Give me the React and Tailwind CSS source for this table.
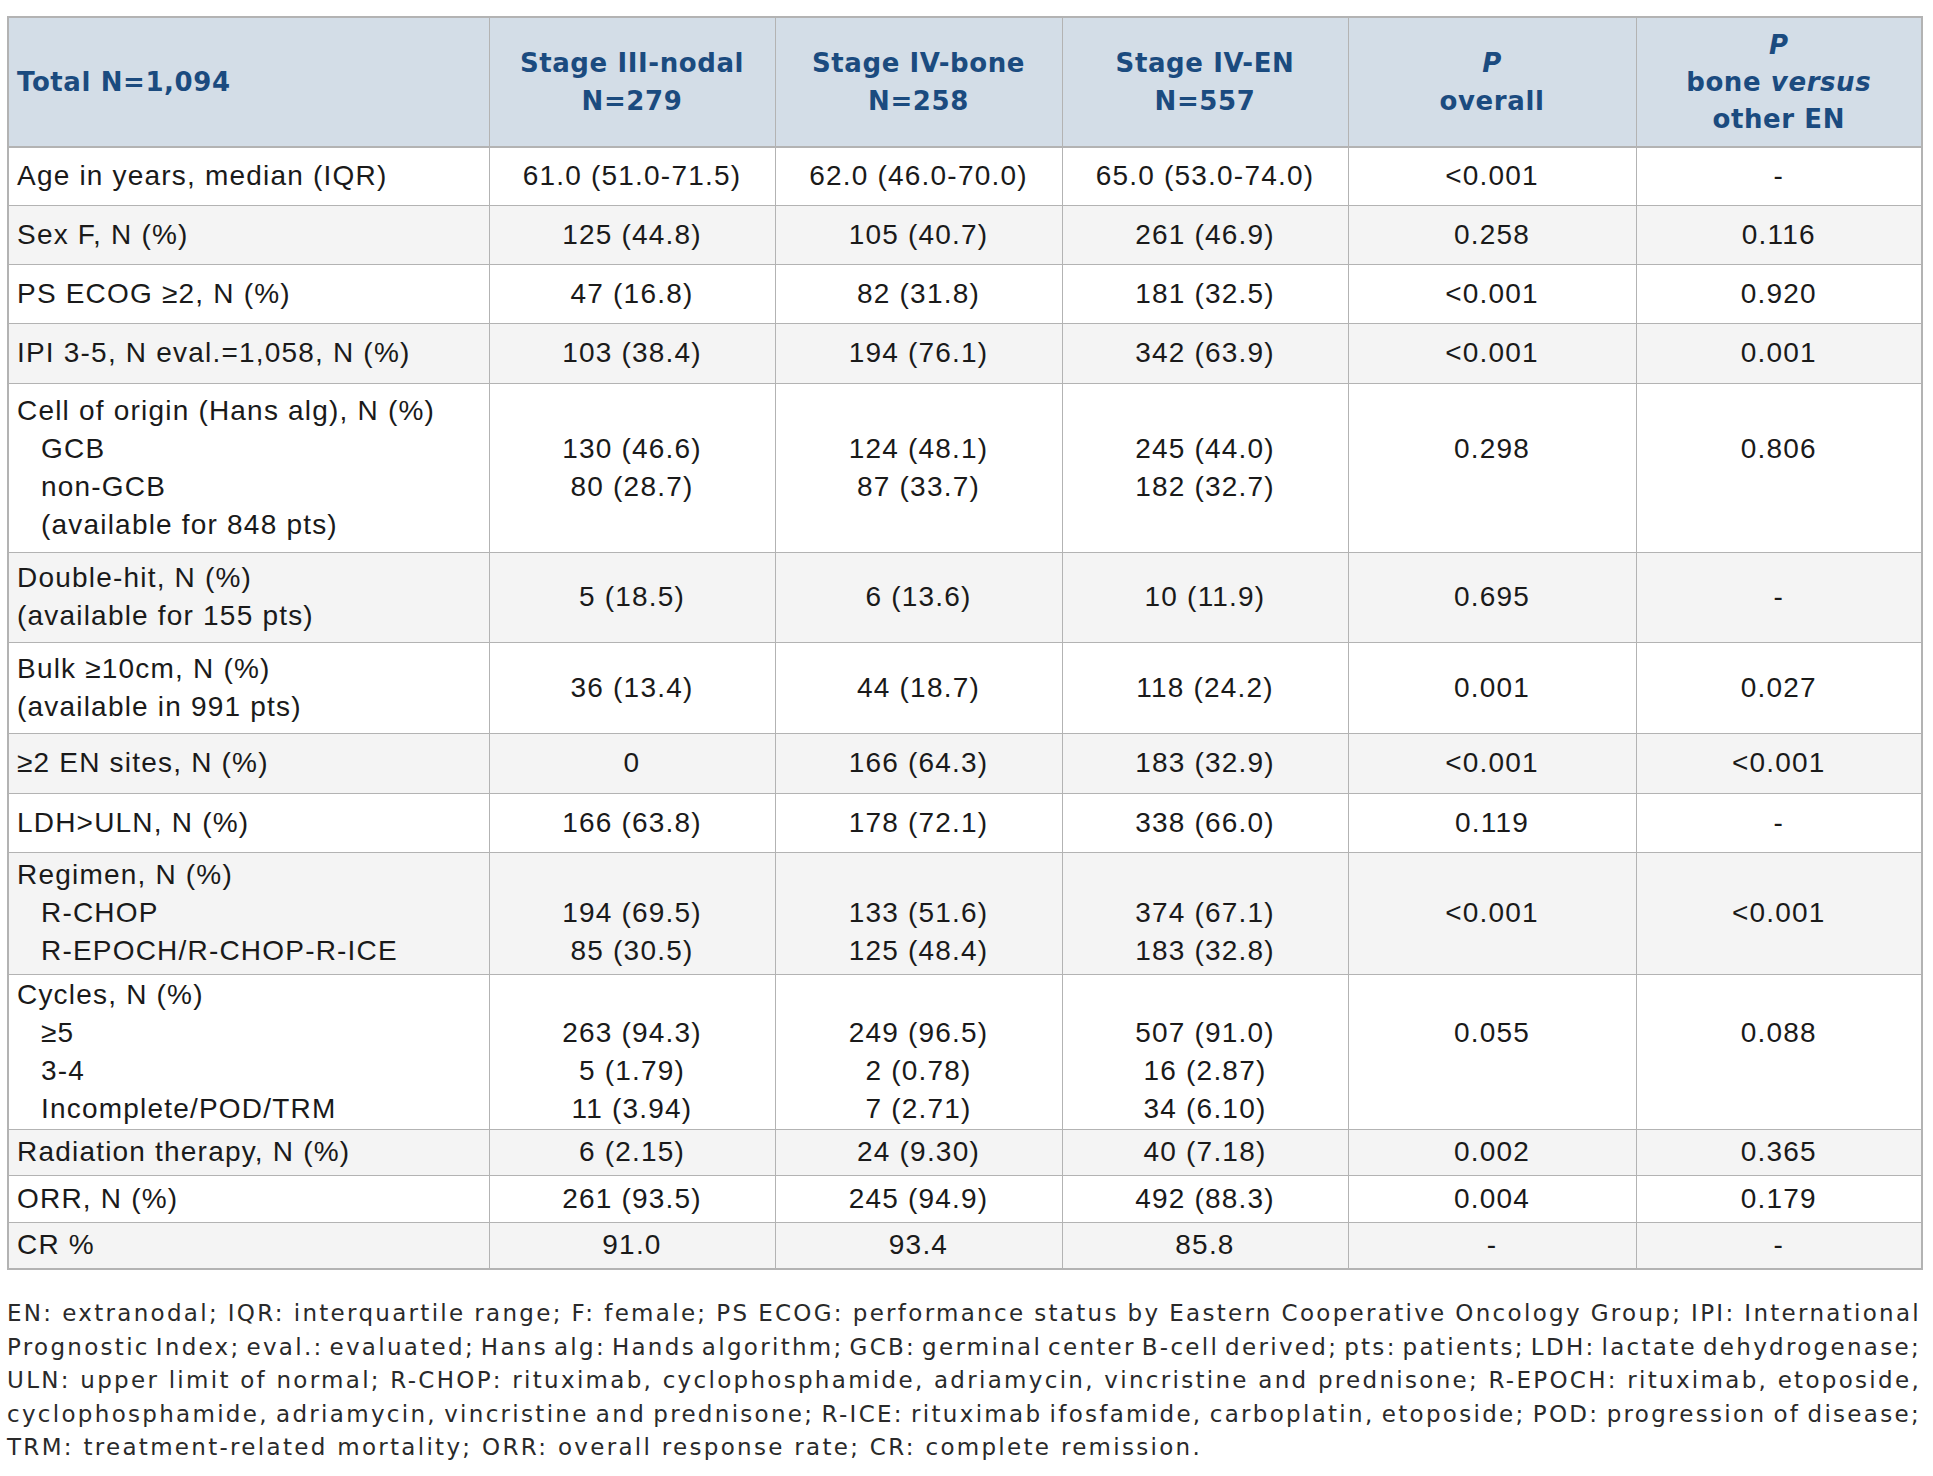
import React from "react";

const body = { fontFamily: '"Liberation Sans", Arial, sans-serif' };

const rows = [
  { h: "h-[58px]", bg: "bg-white", c: [["Age in years, median (IQR)"], ["61.0 (51.0-71.5)"], ["62.0 (46.0-70.0)"], ["65.0 (53.0-74.0)"], ["<0.001"], ["-"]] },
  { h: "h-[59px]", bg: "bg-[#f4f4f4]", c: [["Sex F, N (%)"], ["125 (44.8)"], ["105 (40.7)"], ["261 (46.9)"], ["0.258"], ["0.116"]] },
  { h: "h-[59px]", bg: "bg-white", c: [["PS ECOG ≥2, N (%)"], ["47 (16.8)"], ["82 (31.8)"], ["181 (32.5)"], ["<0.001"], ["0.920"]] },
  { h: "h-[60px]", bg: "bg-[#f4f4f4]", c: [["IPI 3-5, N eval.=1,058, N (%)"], ["103 (38.4)"], ["194 (76.1)"], ["342 (63.9)"], ["<0.001"], ["0.001"]] },
  {
    h: "h-[169px]", bg: "bg-white",
    c: [
      ["Cell of origin (Hans alg), N (%)", ">GCB", ">non-GCB", ">(available for 848 pts)"],
      ["", "130 (46.6)", "80 (28.7)", ""],
      ["", "124 (48.1)", "87 (33.7)", ""],
      ["", "245 (44.0)", "182 (32.7)", ""],
      ["", "0.298", "", ""],
      ["", "0.806", "", ""],
    ],
  },
  { h: "h-[90px]", bg: "bg-[#f4f4f4]", c: [["Double-hit, N (%)", "(available for 155 pts)"], ["5 (18.5)"], ["6 (13.6)"], ["10 (11.9)"], ["0.695"], ["-"]] },
  { h: "h-[91px]", bg: "bg-white", c: [["Bulk ≥10cm, N (%)", "(available in 991 pts)"], ["36 (13.4)"], ["44 (18.7)"], ["118 (24.2)"], ["0.001"], ["0.027"]] },
  { h: "h-[60px]", bg: "bg-[#f4f4f4]", c: [["≥2 EN sites, N (%)"], ["0"], ["166 (64.3)"], ["183 (32.9)"], ["<0.001"], ["<0.001"]] },
  { h: "h-[59px]", bg: "bg-white", c: [["LDH>ULN, N (%)"], ["166 (63.8)"], ["178 (72.1)"], ["338 (66.0)"], ["0.119"], ["-"]] },
  {
    h: "h-[122px]", bg: "bg-[#f4f4f4]",
    c: [
      ["Regimen, N (%)", ">R-CHOP", ">R-EPOCH/R-CHOP-R-ICE"],
      ["", "194 (69.5)", "85 (30.5)"],
      ["", "133 (51.6)", "125 (48.4)"],
      ["", "374 (67.1)", "183 (32.8)"],
      ["", "<0.001", ""],
      ["", "<0.001", ""],
    ],
  },
  {
    h: "h-[155px]", bg: "bg-white",
    c: [
      ["Cycles, N (%)", ">≥5", ">3-4", ">Incomplete/POD/TRM"],
      ["", "263 (94.3)", "5 (1.79)", "11 (3.94)"],
      ["", "249 (96.5)", "2 (0.78)", "7 (2.71)"],
      ["", "507 (91.0)", "16 (2.87)", "34 (6.10)"],
      ["", "0.055", "", ""],
      ["", "0.088", "", ""],
    ],
  },
  { h: "h-[46px]", bg: "bg-[#f4f4f4]", c: [["Radiation therapy, N (%)"], ["6 (2.15)"], ["24 (9.30)"], ["40 (7.18)"], ["0.002"], ["0.365"]] },
  { h: "h-[47px]", bg: "bg-white", c: [["ORR, N (%)"], ["261 (93.5)"], ["245 (94.9)"], ["492 (88.3)"], ["0.004"], ["0.179"]] },
  { h: "h-[47px]", bg: "bg-[#f4f4f4]", c: [["CR %"], ["91.0"], ["93.4"], ["85.8"], ["-"], ["-"]] },
];

const footer = [
  "EN: extranodal; IQR: interquartile range; F: female; PS ECOG: performance status by Eastern Cooperative Oncology Group; IPI: International",
  "Prognostic Index; eval.: evaluated; Hans alg: Hands algorithm; GCB: germinal center B-cell derived; pts: patients; LDH: lactate dehydrogenase;",
  "ULN: upper limit of normal; R-CHOP: rituximab, cyclophosphamide, adriamycin, vincristine and prednisone; R-EPOCH: rituximab, etoposide,",
  "cyclophosphamide, adriamycin, vincristine and prednisone; R-ICE: rituximab ifosfamide, carboplatin, etoposide; POD: progression of disease;",
];

function Lines({ lines }) {
  return (
    <div>
      {lines.map((l, i) => {
        const indent = l.startsWith(">");
        const t = indent ? l.slice(1) : l;
        return (
          <div key={i} className={`h-[38px] leading-[38px] whitespace-nowrap ${indent ? "pl-[24px]" : ""}`}>
            {t === "" ? "\u00a0" : t}
          </div>
        );
      })}
    </div>
  );
}

function HeadCell({ children, first }) {
  return (
    <th
      className={`border-x border-[#b3b3b3] align-middle font-bold text-[#1b4b7f] text-[26px] tracking-[0.6px] leading-[38px] ${first ? "text-left pl-[8px]" : "text-center"}`}
      style={{ fontFamily: '"DejaVu Sans", sans-serif' }}
    >
      {children}
    </th>
  );
}

export default function App() {
  return (
    <div className="w-[1933px] min-h-[1476px] bg-white pt-[16px] pl-[7px]">
      <table className="w-[1914px] table-fixed border-collapse border-2 border-[#b3b3b3] text-[#1a1a1a]" style={body}>
        <colgroup>
          <col className="w-[481px]" />
          <col className="w-[286px]" />
          <col className="w-[287px]" />
          <col className="w-[286px]" />
          <col className="w-[288px]" />
          <col className="w-[286px]" />
        </colgroup>
        <thead>
          <tr className="h-[130px] bg-[#d3dde7] border-b-2 border-[#b3b3b3]">
            <HeadCell first>Total N=1,094</HeadCell>
            <HeadCell>
              <div>Stage III-nodal</div>
              <div>N=279</div>
            </HeadCell>
            <HeadCell>
              <div>Stage IV-bone</div>
              <div>N=258</div>
            </HeadCell>
            <HeadCell>
              <div>Stage IV-EN</div>
              <div>N=557</div>
            </HeadCell>
            <HeadCell>
              <div className="italic">P</div>
              <div>overall</div>
            </HeadCell>
            <HeadCell>
              <div className="italic leading-[37px]">P</div>
              <div className="leading-[37px]">
                bone <span className="italic">versus</span>
              </div>
              <div className="leading-[37px]">other EN</div>
            </HeadCell>
          </tr>
        </thead>
        <tbody>
          {rows.map((r, ri) => (
            <tr key={ri} className={`${r.h} ${r.bg} border-t border-[#b3b3b3]`}>
              {r.c.map((cell, ci) => (
                <td
                  key={ci}
                  className={`border-x border-[#b3b3b3] align-middle text-[28px] tracking-[1.2px] p-0 ${ci === 0 ? "text-left pl-[8px]" : "text-center"}`}
                >
                  <Lines lines={cell} />
                </td>
              ))}
            </tr>
          ))}
        </tbody>
      </table>
      <div
        className="w-[1914px] mt-[27px] text-[23px] tracking-[2.3px] leading-[33.5px] text-[#2a2a2a]"
        style={{ fontFamily: '"DejaVu Sans", sans-serif' }}
      >
        {footer.map((l, i) => (
          <div key={i} className="whitespace-nowrap text-justify [text-align-last:justify] [word-spacing:-8px]">
            {l}
          </div>
        ))}
        <div className="whitespace-nowrap">TRM: treatment-related mortality; ORR: overall response rate; CR: complete remission.</div>
      </div>
    </div>
  );
}
